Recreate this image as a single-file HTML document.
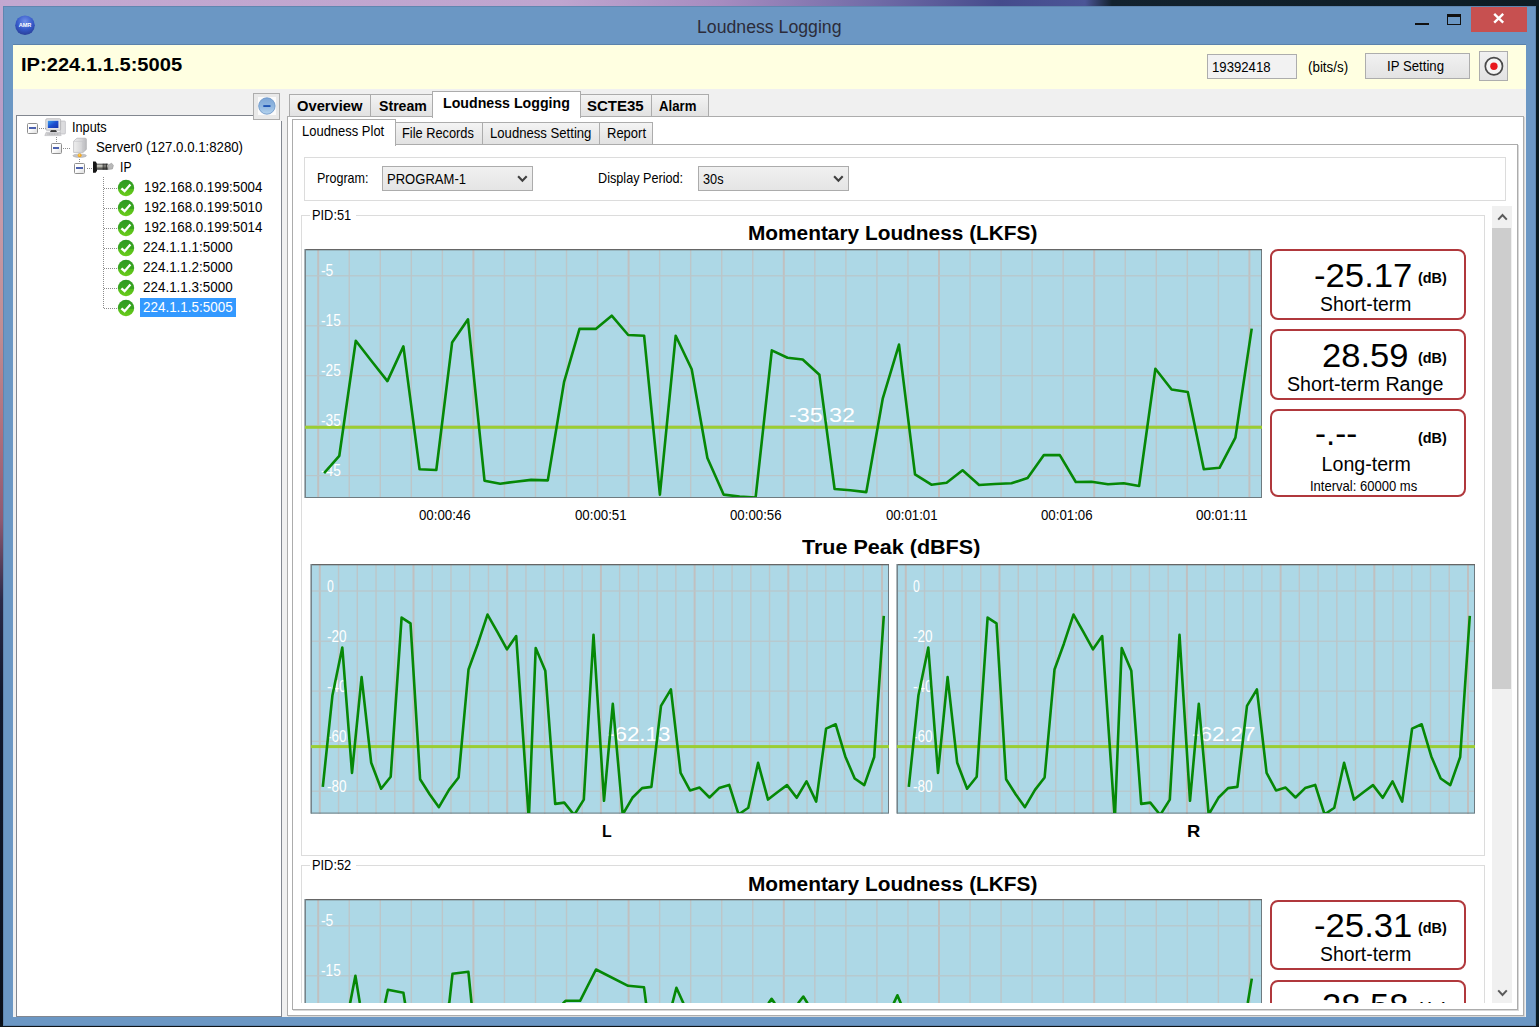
<!DOCTYPE html>
<html><head><meta charset="utf-8"><title>Loudness Logging</title>
<style>
html,body{margin:0;padding:0;}
body{width:1539px;height:1027px;overflow:hidden;position:relative;background:#0b1622;font-family:"Liberation Sans",sans-serif;}
div,svg,span{position:absolute;}
.t{white-space:nowrap;transform-origin:0 50%;display:block;}
</style></head><body>
<div style="left:0px;top:0px;width:1539px;height:1027px;background:#0b1622;"></div>
<div style="left:0px;top:0px;width:1539px;height:8px;background:linear-gradient(90deg,#c3a8d0 0px,#bfa5cf 560px,#a68cc0 720px,#6f6aa6 880px,#454b8c 1000px,#4b5597 1085px,#13222e 1112px,#0d1c24 1539px);"></div>
<div style="left:0px;top:0px;width:5px;height:1027px;background:linear-gradient(180deg,#c3a8d0 0px,#b89cc4 130px,#c79aa8 220px,#c08d92 330px,#b06f7c 430px,#8e5a72 520px,#2a2a48 600px,#10182c 700px,#0a0f18 1027px);"></div>
<div style="left:1534px;top:6px;width:5px;height:1021px;background:#0a1a20;"></div>
<div style="left:0px;top:1024px;width:1539px;height:3px;background:#0d141a;"></div>
<div style="left:3px;top:6px;width:1533px;height:1020px;background:#6b97c4;box-shadow:inset 0 0 0 1px #5f86b0;"></div>
<span class="t" style="left:696.6px;top:18.4px;font-size:18.3px;line-height:18.3px;color:#2c2c3a;transform:scaleX(0.9668);">Loudness Logging</span>
<svg style="left:14px;top:14px" width="22" height="22" viewBox="0 0 22 22"><defs><radialGradient id="ag" cx="50%" cy="30%" r="70%"><stop offset="0" stop-color="#6f8fe8"/><stop offset="0.6" stop-color="#3559c8"/><stop offset="1" stop-color="#2a3f9a"/></radialGradient></defs><circle cx="11" cy="11.3" r="9.8" fill="url(#ag)"/><text x="11" y="13.3" font-family="Liberation Sans" font-size="5.6" font-weight="bold" fill="#fff" text-anchor="middle">AMR</text></svg>
<div style="left:1471px;top:7px;width:56px;height:25px;background:#c75050;"></div>
<svg style="left:1471px;top:7px" width="56" height="25" viewBox="0 0 56 25"><path d="M23.2 6.8 L32.2 15.6 M32.2 6.8 L23.2 15.6" stroke="#fff" stroke-width="2.4" fill="none"/></svg>
<div style="left:1446.5px;top:13.5px;width:14px;height:11px;box-sizing:border-box;border:1.6px solid #111;border-top:3.6px solid #111;"></div>
<div style="left:1415px;top:22.5px;width:14px;height:2.4px;background:#111;"></div>
<div style="left:13px;top:45px;width:1513px;height:972px;background:#f0f0f0;"></div>
<div style="left:13px;top:44px;width:1513px;height:1px;background:#5a82ab;"></div>
<div style="left:13px;top:45px;width:1513px;height:43.6px;background:#ffffe1;"></div>
<span class="t" style="left:21.0px;top:57.1px;font-size:17.8px;line-height:17.8px;color:#000;font-weight:bold;transform:scaleX(1.1320);">IP:224.1.1.5:5005</span>
<div style="left:1207px;top:54px;width:90px;height:24.5px;box-sizing:border-box;border:1px solid #adadad;background:#f2f2f2;"></div>
<span class="t" style="left:1211.5px;top:58.5px;font-size:15px;line-height:15px;color:#000;transform:scaleX(0.8767);">19392418</span>
<span class="t" style="left:1308.3px;top:58.5px;font-size:15px;line-height:15px;color:#000;transform:scaleX(0.8912);">(bits/s)</span>
<div style="left:1365px;top:53px;width:105px;height:25.6px;box-sizing:border-box;border:1px solid #adadad;background:linear-gradient(#f1f1f1,#e3e3e3);"></div>
<span class="t" style="left:1387.0px;top:58.3px;font-size:15.5px;line-height:15.5px;color:#000;transform:scaleX(0.8517);">IP Setting</span>
<div style="left:1478.6px;top:51.3px;width:29.6px;height:29.7px;box-sizing:border-box;border:1px solid #adadad;background:linear-gradient(#f1f1f1,#e3e3e3);"></div>
<svg style="left:1478.6px;top:51.3px" width="30" height="30" viewBox="0 0 30 30"><circle cx="14.9" cy="15.3" r="8.6" fill="#f4f4f4" stroke="#4a4a4a" stroke-width="1.7"/><circle cx="14.9" cy="15.3" r="3.7" fill="#e8161c"/></svg>
<div style="left:16px;top:115px;width:266px;height:902px;box-sizing:border-box;border:1px solid #828790;background:#fff;"></div>
<div style="left:253.2px;top:92.8px;width:27px;height:26.8px;box-sizing:border-box;border:1px solid #adadad;background:#e9e9e9;"></div>
<div style="left:280.2px;top:114px;width:2.5px;height:6.6px;background:#f0f0f0;"></div>
<div style="left:257.9px;top:97px;width:18px;height:18px;background:#fbfbfb;"></div>
<svg style="left:257.9px;top:97px" width="18" height="18" viewBox="0 0 18 18"><defs><linearGradient id="cg" x1="0" y1="0" x2="0" y2="1"><stop offset="0" stop-color="#7ea6d6"/><stop offset="0.5" stop-color="#8fb6e0"/><stop offset="1" stop-color="#b4d3ee"/></linearGradient></defs><circle cx="8.9" cy="9" r="8.2" fill="url(#cg)" stroke="#6f98c8" stroke-width="0.9"/><rect x="5.3" y="8.1" width="7.2" height="1.9" fill="#1f55b4"/></svg>
<div style="left:27px;top:122.7px;width:11px;height:11px;box-sizing:border-box;border:1px solid #8f8f8f;border-radius:1.5px;background:linear-gradient(135deg,#fff 0%,#fdfdfd 45%,#dedede 100%);"><div style="left:1.3px;top:3.8px;width:6.3px;height:1.6px;background:#4d62b0"></div></div>
<div style="left:50.6px;top:142.7px;width:11px;height:11px;box-sizing:border-box;border:1px solid #8f8f8f;border-radius:1.5px;background:linear-gradient(135deg,#fff 0%,#fdfdfd 45%,#dedede 100%);"><div style="left:1.3px;top:3.8px;width:6.3px;height:1.6px;background:#4d62b0"></div></div>
<div style="left:74.2px;top:162.7px;width:11px;height:11px;box-sizing:border-box;border:1px solid #8f8f8f;border-radius:1.5px;background:linear-gradient(135deg,#fff 0%,#fdfdfd 45%,#dedede 100%);"><div style="left:1.3px;top:3.8px;width:6.3px;height:1.6px;background:#4d62b0"></div></div>
<div style="left:39px;top:127.80000000000001px;width:6.5px;height:1px;background:repeating-linear-gradient(90deg,#8c8c8c 0 1px,transparent 1px 2px);"></div>
<div style="left:55.5px;top:137px;width:1px;height:5.5px;background:repeating-linear-gradient(180deg,#8c8c8c 0 1px,transparent 1px 2px);"></div>
<div style="left:63px;top:147.7px;width:7px;height:1px;background:repeating-linear-gradient(90deg,#8c8c8c 0 1px,transparent 1px 2px);"></div>
<div style="left:79.2px;top:158.5px;width:1px;height:4.0px;background:repeating-linear-gradient(180deg,#8c8c8c 0 1px,transparent 1px 2px);"></div>
<div style="left:87px;top:167.7px;width:6px;height:1px;background:repeating-linear-gradient(90deg,#8c8c8c 0 1px,transparent 1px 2px);"></div>
<div style="left:103.2px;top:177px;width:1px;height:131.5px;background:repeating-linear-gradient(180deg,#8c8c8c 0 1px,transparent 1px 2px);"></div>
<svg style="left:44px;top:117px" width="24" height="21" viewBox="0 0 24 21">
<defs><linearGradient id="scr" x1="0" y1="0" x2="1" y2="1"><stop offset="0" stop-color="#3aa0ee"/><stop offset="0.5" stop-color="#1d4fd0"/><stop offset="1" stop-color="#1632a8"/></linearGradient></defs>
<rect x="16.2" y="4" width="5.2" height="13" rx="0.8" fill="#dcdcde" stroke="#b4b4b8" stroke-width="0.6"/>
<rect x="1.8" y="1.8" width="14.8" height="11.4" rx="1" fill="#e4e4e6" stroke="#a8a8ac" stroke-width="0.7"/>
<rect x="3.8" y="3.8" width="10.6" height="7.2" fill="url(#scr)"/>
<path d="M7 13.2 h5 l1 1.8 h-7 z" fill="#222"/>
<path d="M2.2 15.2 h13.6 l1.4 3.4 h-16.4 z" fill="#d2d2d4" stroke="#b0b0b4" stroke-width="0.5"/>
<path d="M3.5 17 h11.6" stroke="#9a9a9e" stroke-width="0.8" stroke-dasharray="1 0.6"/>
</svg>
<svg style="left:71px;top:137px" width="18" height="22" viewBox="0 0 18 22">
<defs><linearGradient id="sv" x1="0" y1="0" x2="1" y2="0"><stop offset="0" stop-color="#efefef"/><stop offset="0.6" stop-color="#d6d6d8"/><stop offset="1" stop-color="#b8b8bc"/></linearGradient></defs>
<path d="M2.6 4.2 L6 1.2 H14.6 L15.4 2 V12.4 L12 15.4 H2.6 Z" fill="url(#sv)" stroke="#a9a9ad" stroke-width="0.6"/>
<path d="M12 4.4 V15.2 M2.8 4.4 H12 L15.2 1.8" stroke="#c4c4c8" stroke-width="0.6" fill="none"/>
<rect x="7.4" y="15" width="2.4" height="2.4" fill="#c9c9cc"/>
<ellipse cx="8.7" cy="18.7" rx="6.8" ry="1.7" fill="#c4c4c6" stroke="#a4a4a8" stroke-width="0.5"/>
<circle cx="8.7" cy="18.3" r="1.9" fill="#f5a623"/><circle cx="8.4" cy="17.9" r="0.9" fill="#ffd75a"/>
</svg>
<svg style="left:92px;top:160px" width="23" height="14" viewBox="0 0 23 14">
<defs><linearGradient id="pl" x1="0" y1="0" x2="0" y2="1"><stop offset="0" stop-color="#3a3a3a"/><stop offset="0.35" stop-color="#d8d8d0"/><stop offset="0.6" stop-color="#8c8c84"/><stop offset="1" stop-color="#2a2a2a"/></linearGradient></defs>
<path d="M1 1.4 h2.6 l1.4 2 v7.4 l-1.4 2 h-2.6 z" fill="#161616"/>
<rect x="4.8" y="3.7" width="11.4" height="6" fill="url(#pl)"/>
<path d="M11.2 3.7 v6 M13 3.7 v6 M14.6 3.7 v6" stroke="#222" stroke-width="0.9"/>
<path d="M16.2 5 l3.4-1.8 l1.8 2.2 l-1 3.6 l-4.2 0.4 z" fill="#b9b9b9" stroke="#8a8a8a" stroke-width="0.5"/>
</svg>
<span class="t" style="left:72.4px;top:119.1px;font-size:15.5px;line-height:15.5px;color:#000;transform:scaleX(0.8219);">Inputs</span>
<span class="t" style="left:96.1px;top:139.1px;font-size:15.5px;line-height:15.5px;color:#000;transform:scaleX(0.8531);">Server0 (127.0.0.1:8280)</span>
<span class="t" style="left:119.7px;top:158.9px;font-size:15.5px;line-height:15.5px;color:#000;transform:scaleX(0.7852);">IP</span>
<svg width="0" height="0" style="left:0;top:0"><defs><linearGradient id="ck" x1="0" y1="0" x2="0" y2="1"><stop offset="0" stop-color="#2f9a22"/><stop offset="0.55" stop-color="#3aa71f"/><stop offset="0.56" stop-color="#52bd1a"/><stop offset="1" stop-color="#6ccb1c"/></linearGradient></defs></svg>
<div style="left:104px;top:187.60000000000002px;width:13.5px;height:1px;background:repeating-linear-gradient(90deg,#8c8c8c 0 1px,transparent 1px 2px);"></div>
<svg style="left:117.4px;top:178.8px" width="18" height="18" viewBox="0 0 18 18"><circle cx="9" cy="9" r="8.2" fill="url(#ck)"/><path d="M4.4 9.3 L7.6 12.2 L13.4 5.6" stroke="#fff" stroke-width="2.3" fill="none"/></svg>
<span class="t" style="left:144.2px;top:179.4px;font-size:15.5px;line-height:15.5px;color:#000;transform:scaleX(0.8579);">192.168.0.199:5004</span>
<div style="left:104px;top:207.60000000000002px;width:13.5px;height:1px;background:repeating-linear-gradient(90deg,#8c8c8c 0 1px,transparent 1px 2px);"></div>
<svg style="left:117.4px;top:198.8px" width="18" height="18" viewBox="0 0 18 18"><circle cx="9" cy="9" r="8.2" fill="url(#ck)"/><path d="M4.4 9.3 L7.6 12.2 L13.4 5.6" stroke="#fff" stroke-width="2.3" fill="none"/></svg>
<span class="t" style="left:144.2px;top:199.4px;font-size:15.5px;line-height:15.5px;color:#000;transform:scaleX(0.8579);">192.168.0.199:5010</span>
<div style="left:104px;top:227.60000000000002px;width:13.5px;height:1px;background:repeating-linear-gradient(90deg,#8c8c8c 0 1px,transparent 1px 2px);"></div>
<svg style="left:117.4px;top:218.8px" width="18" height="18" viewBox="0 0 18 18"><circle cx="9" cy="9" r="8.2" fill="url(#ck)"/><path d="M4.4 9.3 L7.6 12.2 L13.4 5.6" stroke="#fff" stroke-width="2.3" fill="none"/></svg>
<span class="t" style="left:144.2px;top:219.4px;font-size:15.5px;line-height:15.5px;color:#000;transform:scaleX(0.8579);">192.168.0.199:5014</span>
<div style="left:104px;top:247.60000000000002px;width:13.5px;height:1px;background:repeating-linear-gradient(90deg,#8c8c8c 0 1px,transparent 1px 2px);"></div>
<svg style="left:117.4px;top:238.8px" width="18" height="18" viewBox="0 0 18 18"><circle cx="9" cy="9" r="8.2" fill="url(#ck)"/><path d="M4.4 9.3 L7.6 12.2 L13.4 5.6" stroke="#fff" stroke-width="2.3" fill="none"/></svg>
<span class="t" style="left:143.0px;top:239.4px;font-size:15.5px;line-height:15.5px;color:#000;transform:scaleX(0.8664);">224.1.1.1:5000</span>
<div style="left:104px;top:267.6px;width:13.5px;height:1px;background:repeating-linear-gradient(90deg,#8c8c8c 0 1px,transparent 1px 2px);"></div>
<svg style="left:117.4px;top:258.8px" width="18" height="18" viewBox="0 0 18 18"><circle cx="9" cy="9" r="8.2" fill="url(#ck)"/><path d="M4.4 9.3 L7.6 12.2 L13.4 5.6" stroke="#fff" stroke-width="2.3" fill="none"/></svg>
<span class="t" style="left:143.0px;top:259.4px;font-size:15.5px;line-height:15.5px;color:#000;transform:scaleX(0.8664);">224.1.1.2:5000</span>
<div style="left:104px;top:287.6px;width:13.5px;height:1px;background:repeating-linear-gradient(90deg,#8c8c8c 0 1px,transparent 1px 2px);"></div>
<svg style="left:117.4px;top:278.8px" width="18" height="18" viewBox="0 0 18 18"><circle cx="9" cy="9" r="8.2" fill="url(#ck)"/><path d="M4.4 9.3 L7.6 12.2 L13.4 5.6" stroke="#fff" stroke-width="2.3" fill="none"/></svg>
<span class="t" style="left:143.0px;top:279.4px;font-size:15.5px;line-height:15.5px;color:#000;transform:scaleX(0.8664);">224.1.1.3:5000</span>
<div style="left:104px;top:307.6px;width:13.5px;height:1px;background:repeating-linear-gradient(90deg,#8c8c8c 0 1px,transparent 1px 2px);"></div>
<svg style="left:117.4px;top:298.8px" width="18" height="18" viewBox="0 0 18 18"><circle cx="9" cy="9" r="8.2" fill="url(#ck)"/><path d="M4.4 9.3 L7.6 12.2 L13.4 5.6" stroke="#fff" stroke-width="2.3" fill="none"/></svg>
<div style="left:140.4px;top:297.8px;width:95.3px;height:19.5px;background:#3399ff;"></div>
<span class="t" style="left:143.0px;top:299.4px;font-size:15.5px;line-height:15.5px;color:#fff;transform:scaleX(0.8664);">224.1.1.5:5005</span>
<div style="left:287px;top:116px;width:1236.5px;height:900px;box-sizing:border-box;border:1px solid #acacac;background:#fff;box-shadow:1px 1px 0 #d8d8d8;"></div>
<div style="left:289px;top:94px;width:82px;height:22px;box-sizing:border-box;border:1px solid #acacac;border-bottom:none;background:linear-gradient(#f4f4f4,#eaeaea 50%,#e2e2e2);"></div>
<div style="left:370px;top:94px;width:63px;height:22px;box-sizing:border-box;border:1px solid #acacac;border-bottom:none;background:linear-gradient(#f4f4f4,#eaeaea 50%,#e2e2e2);"></div>
<div style="left:580px;top:94px;width:72px;height:22px;box-sizing:border-box;border:1px solid #acacac;border-bottom:none;background:linear-gradient(#f4f4f4,#eaeaea 50%,#e2e2e2);"></div>
<div style="left:651px;top:94px;width:57.5px;height:22px;box-sizing:border-box;border:1px solid #acacac;border-bottom:none;background:linear-gradient(#f4f4f4,#eaeaea 50%,#e2e2e2);"></div>
<div style="left:432px;top:91.4px;width:149px;height:26.599999999999994px;box-sizing:border-box;border:1px solid #acacac;border-bottom:none;background:#fff;"></div>
<span class="t" style="left:296.7px;top:98.2px;font-size:15px;line-height:15px;color:#000;font-weight:bold;transform:scaleX(0.9819);">Overview</span>
<span class="t" style="left:378.6px;top:98.2px;font-size:15px;line-height:15px;color:#000;font-weight:bold;transform:scaleX(0.9418);">Stream</span>
<span class="t" style="left:443.0px;top:95.3px;font-size:15px;line-height:15px;color:#000;font-weight:bold;transform:scaleX(0.9453);">Loudness Logging</span>
<span class="t" style="left:587.0px;top:98.2px;font-size:15px;line-height:15px;color:#000;font-weight:bold;">SCTE35</span>
<span class="t" style="left:659.1px;top:98.2px;font-size:15px;line-height:15px;color:#000;font-weight:bold;transform:scaleX(0.8796);">Alarm</span>
<div style="left:292.4px;top:144.2px;width:1226px;height:866.3px;box-sizing:border-box;border:1px solid #acacac;background:#fff;box-shadow:1px 1px 0 #d8d8d8;"></div>
<div style="left:395.1px;top:122.3px;width:87.5px;height:21.89999999999999px;box-sizing:border-box;border:1px solid #acacac;border-bottom:none;background:linear-gradient(#f4f4f4,#eaeaea 50%,#e2e2e2);"></div>
<div style="left:481.6px;top:122.3px;width:118.39999999999998px;height:21.89999999999999px;box-sizing:border-box;border:1px solid #acacac;border-bottom:none;background:linear-gradient(#f4f4f4,#eaeaea 50%,#e2e2e2);"></div>
<div style="left:599px;top:122.3px;width:54px;height:21.89999999999999px;box-sizing:border-box;border:1px solid #acacac;border-bottom:none;background:linear-gradient(#f4f4f4,#eaeaea 50%,#e2e2e2);"></div>
<div style="left:292.4px;top:119px;width:103.70000000000005px;height:27.19999999999999px;box-sizing:border-box;border:1px solid #acacac;border-bottom:none;background:#fff;"></div>
<span class="t" style="left:302.2px;top:123.6px;font-size:14.5px;line-height:14.5px;color:#000;transform:scaleX(0.8945);">Loudness Plot</span>
<span class="t" style="left:401.5px;top:126.0px;font-size:14.5px;line-height:14.5px;color:#000;transform:scaleX(0.8835);">File Records</span>
<span class="t" style="left:489.5px;top:126.0px;font-size:14.5px;line-height:14.5px;color:#000;transform:scaleX(0.9050);">Loudness Setting</span>
<span class="t" style="left:607.1px;top:126.0px;font-size:14.5px;line-height:14.5px;color:#000;transform:scaleX(0.8962);">Report</span>
<div style="left:304.3px;top:156.8px;width:1201.6px;height:43.8px;box-sizing:border-box;border:1px solid #dcdcdc;background:#fff;"></div>
<span class="t" style="left:317.4px;top:169.7px;font-size:15px;line-height:15px;color:#000;transform:scaleX(0.8349);">Program:</span>
<span class="t" style="left:598.4px;top:169.7px;font-size:15px;line-height:15px;color:#000;transform:scaleX(0.8436);">Display Period:</span>
<div style="left:382px;top:165.6px;width:150.8px;height:25.4px;box-sizing:border-box;border:1px solid #acacac;background:linear-gradient(#f0f0f0,#e5e5e5);"></div>
<span class="t" style="left:387.0px;top:171.2px;font-size:15px;line-height:15px;color:#000;transform:scaleX(0.8696);">PROGRAM-1</span>
<svg style="left:517.1999999999999px;top:174.79999999999998px" width="11" height="8" viewBox="0 0 11 8"><path d="M1.1 1.2 L5.4 5.8 L9.7 1.2" stroke="#404040" stroke-width="2.1" fill="none"/></svg>
<div style="left:698px;top:165.6px;width:150.8px;height:25.4px;box-sizing:border-box;border:1px solid #acacac;background:linear-gradient(#f0f0f0,#e5e5e5);"></div>
<span class="t" style="left:703.0px;top:171.2px;font-size:15px;line-height:15px;color:#000;transform:scaleX(0.8477);">30s</span>
<svg style="left:833.1999999999999px;top:174.79999999999998px" width="11" height="8" viewBox="0 0 11 8"><path d="M1.1 1.2 L5.4 5.8 L9.7 1.2" stroke="#404040" stroke-width="2.1" fill="none"/></svg>
<div style="left:300px;top:206px;width:1212px;height:797px;overflow:hidden;background:#fff;">
<div style="left:1.3px;top:8.5px;width:1183.7px;height:641.5px;box-sizing:border-box;border:1px solid #dcdcdc;"></div>
<div style="left:9.5px;top:2.5px;width:46.5px;height:12px;background:#fff;"></div>
<span class="t" style="left:12.3px;top:1.0px;font-size:15px;line-height:15px;color:#000;transform:scaleX(0.8549);">PID:51</span>
<span class="t" style="left:447.8px;top:16.4px;font-size:21px;line-height:21px;color:#000;font-weight:bold;transform:scaleX(0.9922);">Momentary Loudness (LKFS)</span>
<svg style="left:5px;top:43px;overflow:visible" width="957" height="249" viewBox="0 0 957 249"><rect x="0" y="0" width="957" height="249" fill="#add8e6"/><rect x="12.20" y="0" width="2" height="249" fill="#c0c0c0"/><rect x="43.54" y="0" width="1.4" height="249" fill="#bcc6c9"/><rect x="74.58" y="0" width="1.4" height="249" fill="#bcc6c9"/><rect x="105.62" y="0" width="1.4" height="249" fill="#bcc6c9"/><rect x="136.66" y="0" width="1.4" height="249" fill="#bcc6c9"/><rect x="167.40" y="0" width="2" height="249" fill="#c0c0c0"/><rect x="198.74" y="0" width="1.4" height="249" fill="#bcc6c9"/><rect x="229.78" y="0" width="1.4" height="249" fill="#bcc6c9"/><rect x="260.82" y="0" width="1.4" height="249" fill="#bcc6c9"/><rect x="291.86" y="0" width="1.4" height="249" fill="#bcc6c9"/><rect x="322.60" y="0" width="2" height="249" fill="#c0c0c0"/><rect x="353.94" y="0" width="1.4" height="249" fill="#bcc6c9"/><rect x="384.98" y="0" width="1.4" height="249" fill="#bcc6c9"/><rect x="416.02" y="0" width="1.4" height="249" fill="#bcc6c9"/><rect x="447.06" y="0" width="1.4" height="249" fill="#bcc6c9"/><rect x="477.80" y="0" width="2" height="249" fill="#c0c0c0"/><rect x="509.14" y="0" width="1.4" height="249" fill="#bcc6c9"/><rect x="540.18" y="0" width="1.4" height="249" fill="#bcc6c9"/><rect x="571.22" y="0" width="1.4" height="249" fill="#bcc6c9"/><rect x="602.26" y="0" width="1.4" height="249" fill="#bcc6c9"/><rect x="633.00" y="0" width="2" height="249" fill="#c0c0c0"/><rect x="664.34" y="0" width="1.4" height="249" fill="#bcc6c9"/><rect x="695.38" y="0" width="1.4" height="249" fill="#bcc6c9"/><rect x="726.42" y="0" width="1.4" height="249" fill="#bcc6c9"/><rect x="757.46" y="0" width="1.4" height="249" fill="#bcc6c9"/><rect x="788.20" y="0" width="2" height="249" fill="#c0c0c0"/><rect x="819.54" y="0" width="1.4" height="249" fill="#bcc6c9"/><rect x="850.58" y="0" width="1.4" height="249" fill="#bcc6c9"/><rect x="881.62" y="0" width="1.4" height="249" fill="#bcc6c9"/><rect x="912.66" y="0" width="1.4" height="249" fill="#bcc6c9"/><rect x="943.40" y="0" width="2" height="249" fill="#c0c0c0"/><rect x="0" y="26.20" width="957" height="1.2" fill="#b9c6ca"/><rect x="0" y="76.20" width="957" height="1.2" fill="#b9c6ca"/><rect x="0" y="126.10" width="957" height="1.2" fill="#b9c6ca"/><rect x="0" y="176.10" width="957" height="1.2" fill="#b9c6ca"/><rect x="0" y="226.00" width="957" height="1.2" fill="#b9c6ca"/><rect x="0.5" y="0.5" width="956" height="248" fill="none" stroke="#6e7b80" stroke-width="1"/><rect x="0" y="0" width="957" height="1.3" fill="#666"/><rect x="-0.6" y="0" width="1.5" height="249" fill="#76868c"/><rect x="0" y="176.80" width="957" height="3" fill="#9acd32"/></svg>
<span class="t" style="left:20.8px;top:57.2px;font-size:16px;line-height:16px;color:#fff;transform:scaleX(0.8647);">-5</span>
<span class="t" style="left:20.8px;top:107.2px;font-size:16px;line-height:16px;color:#fff;transform:scaleX(0.8563);">-15</span>
<span class="t" style="left:20.8px;top:157.1px;font-size:16px;line-height:16px;color:#fff;transform:scaleX(0.8563);">-25</span>
<span class="t" style="left:20.8px;top:207.1px;font-size:16px;line-height:16px;color:#fff;transform:scaleX(0.8563);">-35</span>
<span class="t" style="left:20.8px;top:257.0px;font-size:16px;line-height:16px;color:#fff;transform:scaleX(0.8563);">-45</span>
<span class="t" style="left:489.0px;top:198.6px;font-size:20px;line-height:20px;color:#fff;transform:scaleX(1.1640);">-35.32</span>
<svg style="left:5px;top:43px" width="957" height="248" viewBox="0 0 957 248"><polyline points="19.1,224.1 34.3,206.8 50.8,91.8 66.5,112.0 82.4,132.1 98.4,97.4 114.6,220.3 131.3,221.0 147.1,93.6 163.0,70.3 179.5,231.7 195.2,234.7 210.4,232.7 226.1,230.9 242.8,231.4 259.1,132.8 274.5,79.9 290.7,79.9 306.7,66.7 323.2,86.0 339.1,86.7 354.9,245.6 370.7,86.7 386.7,120.2 402.4,208.9 418.6,245.6 434.6,247.6 450.6,248.6 466.8,101.4 482.5,108.8 497.7,110.5 514.4,125.8 529.6,240.0 545.3,241.3 561.3,243.1 577.8,149.3 594.0,95.6 610.0,225.3 626.4,235.7 641.6,233.7 657.6,221.3 674.1,236.0 689.8,235.0 706.5,234.2 722.6,229.1 738.9,206.1 754.8,206.1 770.8,233.0 786.5,232.7 803.0,235.2 818.7,234.2 834.1,237.0 850.4,119.7 866.6,140.5 882.8,143.0 898.8,220.3 914.5,218.8 930.4,188.6 946.7,79.6" fill="none" stroke="#068806" stroke-width="2.6" stroke-linejoin="round"/></svg>
<div style="left:970px;top:43.4px;width:195.6px;height:70.2px;box-sizing:border-box;border:2px solid #b0383c;border-radius:8px;background:#fff;"></div>
<span class="t" style="left:1013.6px;top:52.7px;font-size:33.8px;line-height:33.8px;color:#000;transform:scaleX(1.0268);">-25.17</span>
<span class="t" style="left:1117.6px;top:64.7px;font-size:14px;line-height:14px;color:#000;font-weight:bold;transform:scaleX(1.0291);">(dB)</span>
<span class="t" style="left:1020.3px;top:88.6px;font-size:19.6px;line-height:19.6px;color:#000;transform:scaleX(0.9874);">Short-term</span>
<div style="left:970px;top:123.4px;width:195.6px;height:70.2px;box-sizing:border-box;border:2px solid #b0383c;border-radius:8px;background:#fff;"></div>
<span class="t" style="left:1021.6px;top:132.7px;font-size:33.8px;line-height:33.8px;color:#000;transform:scaleX(1.0216);">28.59</span>
<span class="t" style="left:1117.6px;top:144.7px;font-size:14px;line-height:14px;color:#000;font-weight:bold;transform:scaleX(1.0291);">(dB)</span>
<span class="t" style="left:986.5px;top:168.6px;font-size:19.6px;line-height:19.6px;color:#000;transform:scaleX(1.0041);">Short-term Range</span>
<div style="left:970px;top:203.3px;width:195.6px;height:88px;box-sizing:border-box;border:2px solid #b0383c;border-radius:8px;background:#fff;"></div>
<span class="t" style="left:1015.4px;top:211.4px;font-size:33.8px;line-height:33.8px;color:#000;transform:scaleX(0.9779);">-.--</span>
<span class="t" style="left:1117.5px;top:224.5px;font-size:14px;line-height:14px;color:#000;font-weight:bold;transform:scaleX(1.0291);">(dB)</span>
<span class="t" style="left:1021.6px;top:249.3px;font-size:19.6px;line-height:19.6px;color:#000;">Long-term</span>
<span class="t" style="left:1010.3px;top:271.6px;font-size:15px;line-height:15px;color:#000;transform:scaleX(0.8688);">Interval: 60000 ms</span>
<span class="t" style="left:119.3px;top:301.9px;font-size:14.5px;line-height:14.5px;color:#000;transform:scaleX(0.9143);">00:00:46</span>
<span class="t" style="left:274.7px;top:301.9px;font-size:14.5px;line-height:14.5px;color:#000;transform:scaleX(0.9143);">00:00:51</span>
<span class="t" style="left:430.1px;top:301.9px;font-size:14.5px;line-height:14.5px;color:#000;transform:scaleX(0.9143);">00:00:56</span>
<span class="t" style="left:585.5px;top:301.9px;font-size:14.5px;line-height:14.5px;color:#000;transform:scaleX(0.9143);">00:01:01</span>
<span class="t" style="left:740.9px;top:301.9px;font-size:14.5px;line-height:14.5px;color:#000;transform:scaleX(0.9143);">00:01:06</span>
<span class="t" style="left:896.3px;top:301.9px;font-size:14.5px;line-height:14.5px;color:#000;transform:scaleX(0.9321);">00:01:11</span>
<span class="t" style="left:502.4px;top:330.2px;font-size:21px;line-height:21px;color:#000;font-weight:bold;transform:scaleX(1.0255);">True Peak (dBFS)</span>
<svg style="left:11px;top:358px;overflow:visible" width="578" height="249.6" viewBox="0 0 578 249.6"><rect x="0" y="0" width="578" height="249.6" fill="#add8e6"/><rect x="7.80" y="0" width="2" height="249.6" fill="#c0c0c0"/><rect x="26.84" y="0" width="1.4" height="249.6" fill="#bcc6c9"/><rect x="45.58" y="0" width="1.4" height="249.6" fill="#bcc6c9"/><rect x="64.32" y="0" width="1.4" height="249.6" fill="#bcc6c9"/><rect x="83.06" y="0" width="1.4" height="249.6" fill="#bcc6c9"/><rect x="101.50" y="0" width="2" height="249.6" fill="#c0c0c0"/><rect x="120.54" y="0" width="1.4" height="249.6" fill="#bcc6c9"/><rect x="139.28" y="0" width="1.4" height="249.6" fill="#bcc6c9"/><rect x="158.02" y="0" width="1.4" height="249.6" fill="#bcc6c9"/><rect x="176.76" y="0" width="1.4" height="249.6" fill="#bcc6c9"/><rect x="195.20" y="0" width="2" height="249.6" fill="#c0c0c0"/><rect x="214.24" y="0" width="1.4" height="249.6" fill="#bcc6c9"/><rect x="232.98" y="0" width="1.4" height="249.6" fill="#bcc6c9"/><rect x="251.72" y="0" width="1.4" height="249.6" fill="#bcc6c9"/><rect x="270.46" y="0" width="1.4" height="249.6" fill="#bcc6c9"/><rect x="288.90" y="0" width="2" height="249.6" fill="#c0c0c0"/><rect x="307.94" y="0" width="1.4" height="249.6" fill="#bcc6c9"/><rect x="326.68" y="0" width="1.4" height="249.6" fill="#bcc6c9"/><rect x="345.42" y="0" width="1.4" height="249.6" fill="#bcc6c9"/><rect x="364.16" y="0" width="1.4" height="249.6" fill="#bcc6c9"/><rect x="382.60" y="0" width="2" height="249.6" fill="#c0c0c0"/><rect x="401.64" y="0" width="1.4" height="249.6" fill="#bcc6c9"/><rect x="420.38" y="0" width="1.4" height="249.6" fill="#bcc6c9"/><rect x="439.12" y="0" width="1.4" height="249.6" fill="#bcc6c9"/><rect x="457.86" y="0" width="1.4" height="249.6" fill="#bcc6c9"/><rect x="476.30" y="0" width="2" height="249.6" fill="#c0c0c0"/><rect x="495.34" y="0" width="1.4" height="249.6" fill="#bcc6c9"/><rect x="514.08" y="0" width="1.4" height="249.6" fill="#bcc6c9"/><rect x="532.82" y="0" width="1.4" height="249.6" fill="#bcc6c9"/><rect x="551.56" y="0" width="1.4" height="249.6" fill="#bcc6c9"/><rect x="570.00" y="0" width="2" height="249.6" fill="#c0c0c0"/><rect x="0" y="26.40" width="578" height="1.2" fill="#b9c6ca"/><rect x="0" y="76.60" width="578" height="1.2" fill="#b9c6ca"/><rect x="0" y="126.50" width="578" height="1.2" fill="#b9c6ca"/><rect x="0" y="176.70" width="578" height="1.2" fill="#b9c6ca"/><rect x="0" y="226.60" width="578" height="1.2" fill="#b9c6ca"/><rect x="0.5" y="0.5" width="577" height="248.6" fill="none" stroke="#6e7b80" stroke-width="1"/><rect x="0" y="0" width="578" height="1.3" fill="#666"/><rect x="-0.6" y="0" width="1.5" height="249.6" fill="#76868c"/><rect x="0" y="181.10" width="578" height="3" fill="#9acd32"/></svg>
<span class="t" style="left:27.4px;top:372.7px;font-size:16px;line-height:16px;color:#fff;transform:scaleX(0.7643);">0</span>
<span class="t" style="left:27.4px;top:422.9px;font-size:16px;line-height:16px;color:#fff;transform:scaleX(0.8433);">-20</span>
<span class="t" style="left:27.4px;top:472.8px;font-size:16px;line-height:16px;color:#fff;transform:scaleX(0.8433);">-40</span>
<span class="t" style="left:27.4px;top:523.0px;font-size:16px;line-height:16px;color:#fff;transform:scaleX(0.8433);">-60</span>
<span class="t" style="left:27.4px;top:572.9px;font-size:16px;line-height:16px;color:#fff;transform:scaleX(0.8433);">-80</span>
<span class="t" style="left:306.5px;top:518.3px;font-size:20px;line-height:20px;color:#fff;transform:scaleX(1.1199);">-62.13</span>
<svg style="left:11px;top:358px" width="578" height="248.6" viewBox="0 0 578 248.6"><polyline points="11.8,222.9 21.4,131.6 31.3,83.5 41.0,208.9 50.6,113.1 60.2,198.8 70.1,224.7 79.7,212.7 90.6,53.6 99.5,59.4 109.1,215.3 118.8,230.5 127.9,243.2 138.0,225.9 147.6,213.5 157.5,105.5 166.9,79.7 176.5,50.6 186.2,67.7 196.0,85.3 205.2,72.1 217.8,255.8 224.7,84.0 234.3,106.8 244.2,239.9 253.3,238.6 263.2,251.0 272.8,235.6 282.5,70.8 293.0,236.8 301.8,139.8 311.7,250.5 321.4,233.8 331.1,224.1 340.4,222.9 350.0,141.8 359.9,125.3 369.6,208.9 379.0,226.4 388.6,223.6 398.5,233.5 408.1,224.1 418.2,220.9 427.6,250.5 437.3,243.7 447.1,198.8 457.0,235.6 466.4,228.2 476.0,221.1 485.7,233.8 495.5,217.3 505.2,237.6 515.1,164.6 524.7,160.3 534.3,192.5 543.7,214.5 553.3,221.1 563.2,193.0 572.8,51.8" fill="none" stroke="#068806" stroke-width="2.6" stroke-linejoin="round"/></svg>
<svg style="left:596.5px;top:358px;overflow:visible" width="578" height="249.6" viewBox="0 0 578 249.6"><rect x="0" y="0" width="578" height="249.6" fill="#add8e6"/><rect x="7.80" y="0" width="2" height="249.6" fill="#c0c0c0"/><rect x="26.84" y="0" width="1.4" height="249.6" fill="#bcc6c9"/><rect x="45.58" y="0" width="1.4" height="249.6" fill="#bcc6c9"/><rect x="64.32" y="0" width="1.4" height="249.6" fill="#bcc6c9"/><rect x="83.06" y="0" width="1.4" height="249.6" fill="#bcc6c9"/><rect x="101.50" y="0" width="2" height="249.6" fill="#c0c0c0"/><rect x="120.54" y="0" width="1.4" height="249.6" fill="#bcc6c9"/><rect x="139.28" y="0" width="1.4" height="249.6" fill="#bcc6c9"/><rect x="158.02" y="0" width="1.4" height="249.6" fill="#bcc6c9"/><rect x="176.76" y="0" width="1.4" height="249.6" fill="#bcc6c9"/><rect x="195.20" y="0" width="2" height="249.6" fill="#c0c0c0"/><rect x="214.24" y="0" width="1.4" height="249.6" fill="#bcc6c9"/><rect x="232.98" y="0" width="1.4" height="249.6" fill="#bcc6c9"/><rect x="251.72" y="0" width="1.4" height="249.6" fill="#bcc6c9"/><rect x="270.46" y="0" width="1.4" height="249.6" fill="#bcc6c9"/><rect x="288.90" y="0" width="2" height="249.6" fill="#c0c0c0"/><rect x="307.94" y="0" width="1.4" height="249.6" fill="#bcc6c9"/><rect x="326.68" y="0" width="1.4" height="249.6" fill="#bcc6c9"/><rect x="345.42" y="0" width="1.4" height="249.6" fill="#bcc6c9"/><rect x="364.16" y="0" width="1.4" height="249.6" fill="#bcc6c9"/><rect x="382.60" y="0" width="2" height="249.6" fill="#c0c0c0"/><rect x="401.64" y="0" width="1.4" height="249.6" fill="#bcc6c9"/><rect x="420.38" y="0" width="1.4" height="249.6" fill="#bcc6c9"/><rect x="439.12" y="0" width="1.4" height="249.6" fill="#bcc6c9"/><rect x="457.86" y="0" width="1.4" height="249.6" fill="#bcc6c9"/><rect x="476.30" y="0" width="2" height="249.6" fill="#c0c0c0"/><rect x="495.34" y="0" width="1.4" height="249.6" fill="#bcc6c9"/><rect x="514.08" y="0" width="1.4" height="249.6" fill="#bcc6c9"/><rect x="532.82" y="0" width="1.4" height="249.6" fill="#bcc6c9"/><rect x="551.56" y="0" width="1.4" height="249.6" fill="#bcc6c9"/><rect x="570.00" y="0" width="2" height="249.6" fill="#c0c0c0"/><rect x="0" y="26.40" width="578" height="1.2" fill="#b9c6ca"/><rect x="0" y="76.60" width="578" height="1.2" fill="#b9c6ca"/><rect x="0" y="126.50" width="578" height="1.2" fill="#b9c6ca"/><rect x="0" y="176.70" width="578" height="1.2" fill="#b9c6ca"/><rect x="0" y="226.60" width="578" height="1.2" fill="#b9c6ca"/><rect x="0.5" y="0.5" width="577" height="248.6" fill="none" stroke="#6e7b80" stroke-width="1"/><rect x="0" y="0" width="578" height="1.3" fill="#666"/><rect x="-0.6" y="0" width="1.5" height="249.6" fill="#76868c"/><rect x="0" y="181.10" width="578" height="3" fill="#9acd32"/></svg>
<span class="t" style="left:612.9px;top:372.7px;font-size:16px;line-height:16px;color:#fff;transform:scaleX(0.7643);">0</span>
<span class="t" style="left:612.9px;top:422.9px;font-size:16px;line-height:16px;color:#fff;transform:scaleX(0.8433);">-20</span>
<span class="t" style="left:612.9px;top:472.8px;font-size:16px;line-height:16px;color:#fff;transform:scaleX(0.8433);">-40</span>
<span class="t" style="left:612.9px;top:523.0px;font-size:16px;line-height:16px;color:#fff;transform:scaleX(0.8433);">-60</span>
<span class="t" style="left:612.9px;top:572.9px;font-size:16px;line-height:16px;color:#fff;transform:scaleX(0.8433);">-80</span>
<span class="t" style="left:892.0px;top:518.3px;font-size:20px;line-height:20px;color:#fff;transform:scaleX(1.1199);">-62.27</span>
<svg style="left:596.5px;top:358px" width="578" height="248.6" viewBox="0 0 578 248.6"><polyline points="11.8,222.9 21.4,131.6 31.3,83.5 41.0,208.9 50.6,113.1 60.2,198.8 70.1,224.7 79.7,212.7 90.6,53.6 99.5,59.4 109.1,215.3 118.8,230.5 127.9,243.2 138.0,225.9 147.6,213.5 157.5,105.5 166.9,79.7 176.5,50.6 186.2,67.7 196.0,85.3 205.2,72.1 217.8,255.8 224.7,84.0 234.3,106.8 244.2,239.9 253.3,238.6 263.2,251.0 272.8,235.6 282.5,70.8 293.0,236.8 301.8,139.8 311.7,250.5 321.4,233.8 331.1,224.1 340.4,222.9 350.0,141.8 359.9,125.3 369.6,208.9 379.0,226.4 388.6,223.6 398.5,233.5 408.1,224.1 418.2,220.9 427.6,250.5 437.3,243.7 447.1,198.8 457.0,235.6 466.4,228.2 476.0,221.1 485.7,233.8 495.5,217.3 505.2,237.6 515.1,164.6 524.7,160.3 534.3,192.5 543.7,214.5 553.3,221.1 563.2,193.0 572.8,51.8" fill="none" stroke="#068806" stroke-width="2.6" stroke-linejoin="round"/></svg>
<span class="t" style="left:302.0px;top:616.8px;font-size:16.5px;line-height:16.5px;color:#000;font-weight:bold;transform:scaleX(0.9625);">L</span>
<span class="t" style="left:886.6px;top:616.8px;font-size:16.5px;line-height:16.5px;color:#000;font-weight:bold;transform:scaleX(1.1161);">R</span>
<div style="left:1.3px;top:658.7px;width:1183.7px;height:641.5px;box-sizing:border-box;border:1px solid #dcdcdc;"></div>
<div style="left:9.5px;top:652.7px;width:46.5px;height:12px;background:#fff;"></div>
<span class="t" style="left:12.3px;top:651.2px;font-size:15px;line-height:15px;color:#000;transform:scaleX(0.8549);">PID:52</span>
<span class="t" style="left:447.8px;top:666.6px;font-size:21px;line-height:21px;color:#000;font-weight:bold;transform:scaleX(0.9922);">Momentary Loudness (LKFS)</span>
<svg style="left:5px;top:693.2px;overflow:visible" width="957" height="249" viewBox="0 0 957 249"><rect x="0" y="0" width="957" height="249" fill="#add8e6"/><rect x="12.20" y="0" width="2" height="249" fill="#c0c0c0"/><rect x="43.54" y="0" width="1.4" height="249" fill="#bcc6c9"/><rect x="74.58" y="0" width="1.4" height="249" fill="#bcc6c9"/><rect x="105.62" y="0" width="1.4" height="249" fill="#bcc6c9"/><rect x="136.66" y="0" width="1.4" height="249" fill="#bcc6c9"/><rect x="167.40" y="0" width="2" height="249" fill="#c0c0c0"/><rect x="198.74" y="0" width="1.4" height="249" fill="#bcc6c9"/><rect x="229.78" y="0" width="1.4" height="249" fill="#bcc6c9"/><rect x="260.82" y="0" width="1.4" height="249" fill="#bcc6c9"/><rect x="291.86" y="0" width="1.4" height="249" fill="#bcc6c9"/><rect x="322.60" y="0" width="2" height="249" fill="#c0c0c0"/><rect x="353.94" y="0" width="1.4" height="249" fill="#bcc6c9"/><rect x="384.98" y="0" width="1.4" height="249" fill="#bcc6c9"/><rect x="416.02" y="0" width="1.4" height="249" fill="#bcc6c9"/><rect x="447.06" y="0" width="1.4" height="249" fill="#bcc6c9"/><rect x="477.80" y="0" width="2" height="249" fill="#c0c0c0"/><rect x="509.14" y="0" width="1.4" height="249" fill="#bcc6c9"/><rect x="540.18" y="0" width="1.4" height="249" fill="#bcc6c9"/><rect x="571.22" y="0" width="1.4" height="249" fill="#bcc6c9"/><rect x="602.26" y="0" width="1.4" height="249" fill="#bcc6c9"/><rect x="633.00" y="0" width="2" height="249" fill="#c0c0c0"/><rect x="664.34" y="0" width="1.4" height="249" fill="#bcc6c9"/><rect x="695.38" y="0" width="1.4" height="249" fill="#bcc6c9"/><rect x="726.42" y="0" width="1.4" height="249" fill="#bcc6c9"/><rect x="757.46" y="0" width="1.4" height="249" fill="#bcc6c9"/><rect x="788.20" y="0" width="2" height="249" fill="#c0c0c0"/><rect x="819.54" y="0" width="1.4" height="249" fill="#bcc6c9"/><rect x="850.58" y="0" width="1.4" height="249" fill="#bcc6c9"/><rect x="881.62" y="0" width="1.4" height="249" fill="#bcc6c9"/><rect x="912.66" y="0" width="1.4" height="249" fill="#bcc6c9"/><rect x="943.40" y="0" width="2" height="249" fill="#c0c0c0"/><rect x="0" y="26.20" width="957" height="1.2" fill="#b9c6ca"/><rect x="0" y="76.20" width="957" height="1.2" fill="#b9c6ca"/><rect x="0" y="126.10" width="957" height="1.2" fill="#b9c6ca"/><rect x="0" y="176.10" width="957" height="1.2" fill="#b9c6ca"/><rect x="0" y="226.00" width="957" height="1.2" fill="#b9c6ca"/><rect x="0.5" y="0.5" width="956" height="248" fill="none" stroke="#6e7b80" stroke-width="1"/><rect x="0" y="0" width="957" height="1.3" fill="#666"/><rect x="-0.6" y="0" width="1.5" height="249" fill="#76868c"/><rect x="0" y="887.00" width="957" height="3" fill="#9acd32"/></svg>
<span class="t" style="left:20.8px;top:707.4px;font-size:16px;line-height:16px;color:#fff;transform:scaleX(0.8647);">-5</span>
<span class="t" style="left:20.8px;top:757.4px;font-size:16px;line-height:16px;color:#fff;transform:scaleX(0.8563);">-15</span>
<span class="t" style="left:20.8px;top:807.3px;font-size:16px;line-height:16px;color:#fff;transform:scaleX(0.8563);">-25</span>
<span class="t" style="left:20.8px;top:857.3px;font-size:16px;line-height:16px;color:#fff;transform:scaleX(0.8563);">-35</span>
<span class="t" style="left:20.8px;top:907.2px;font-size:16px;line-height:16px;color:#fff;transform:scaleX(0.8563);">-45</span>
<svg style="left:5px;top:693.2px" width="957" height="248" viewBox="0 0 957 248"><polyline points="19.0,140.8 35.0,130.8 45.2,103.8 50.4,76.8 54.8,103.8 66.0,150.8 80.1,103.8 82.9,90.8 98.4,93.8 100.0,103.8 115.0,140.8 144.3,103.8 147.5,74.8 163.4,72.8 166.5,103.8 179.0,150.8 242.0,140.8 258.5,103.8 260.5,101.8 275.1,101.8 291.0,70.5 323.1,86.8 339.0,88.3 341.0,103.8 355.0,160.8 367.5,103.8 371.4,88.8 378.2,103.8 387.0,150.8 450.0,150.8 463.8,103.8 466.6,99.8 469.4,103.8 482.0,150.8 493.5,103.8 498.3,97.5 502.2,103.8 515.0,150.8 577.0,150.8 588.9,103.8 592.4,96.3 595.6,103.8 610.0,150.8 930.0,150.8 942.8,103.8 946.8,79.6" fill="none" stroke="#068806" stroke-width="2.6" stroke-linejoin="round"/></svg>
<div style="left:970px;top:693.6px;width:195.6px;height:70.2px;box-sizing:border-box;border:2px solid #b0383c;border-radius:8px;background:#fff;"></div>
<span class="t" style="left:1013.6px;top:702.9px;font-size:33.8px;line-height:33.8px;color:#000;transform:scaleX(1.0268);">-25.31</span>
<span class="t" style="left:1117.6px;top:714.9px;font-size:14px;line-height:14px;color:#000;font-weight:bold;transform:scaleX(1.0291);">(dB)</span>
<span class="t" style="left:1020.3px;top:738.8px;font-size:19.6px;line-height:19.6px;color:#000;transform:scaleX(0.9874);">Short-term</span>
<div style="left:970px;top:773.6px;width:195.6px;height:70.2px;box-sizing:border-box;border:2px solid #b0383c;border-radius:8px;background:#fff;"></div>
<span class="t" style="left:1021.6px;top:782.9px;font-size:33.8px;line-height:33.8px;color:#000;transform:scaleX(1.0216);">28.58</span>
<span class="t" style="left:1117.6px;top:794.9px;font-size:14px;line-height:14px;color:#000;font-weight:bold;transform:scaleX(1.0291);">(dB)</span>
<span class="t" style="left:986.5px;top:818.8px;font-size:19.6px;line-height:19.6px;color:#000;transform:scaleX(1.0041);">Short-term Range</span>
<div style="left:1192.3px;top:0px;width:19.7px;height:797px;background:#f0f0f0;"></div>
<div style="left:1192.3px;top:21.5px;width:18.7px;height:461.2px;background:#cdcdcd;"></div>
<svg style="left:1196.5px;top:7px" width="11" height="8" viewBox="0 0 11 8"><path d="M1.2 6.6 L5.5 2 L9.8 6.6" stroke="#5a5a5a" stroke-width="2" fill="none"/></svg>
<svg style="left:1196.5px;top:782.5px" width="11" height="8" viewBox="0 0 11 8"><path d="M1.2 1.4 L5.5 6 L9.8 1.4" stroke="#5a5a5a" stroke-width="2" fill="none"/></svg>
</div>
</body></html>
